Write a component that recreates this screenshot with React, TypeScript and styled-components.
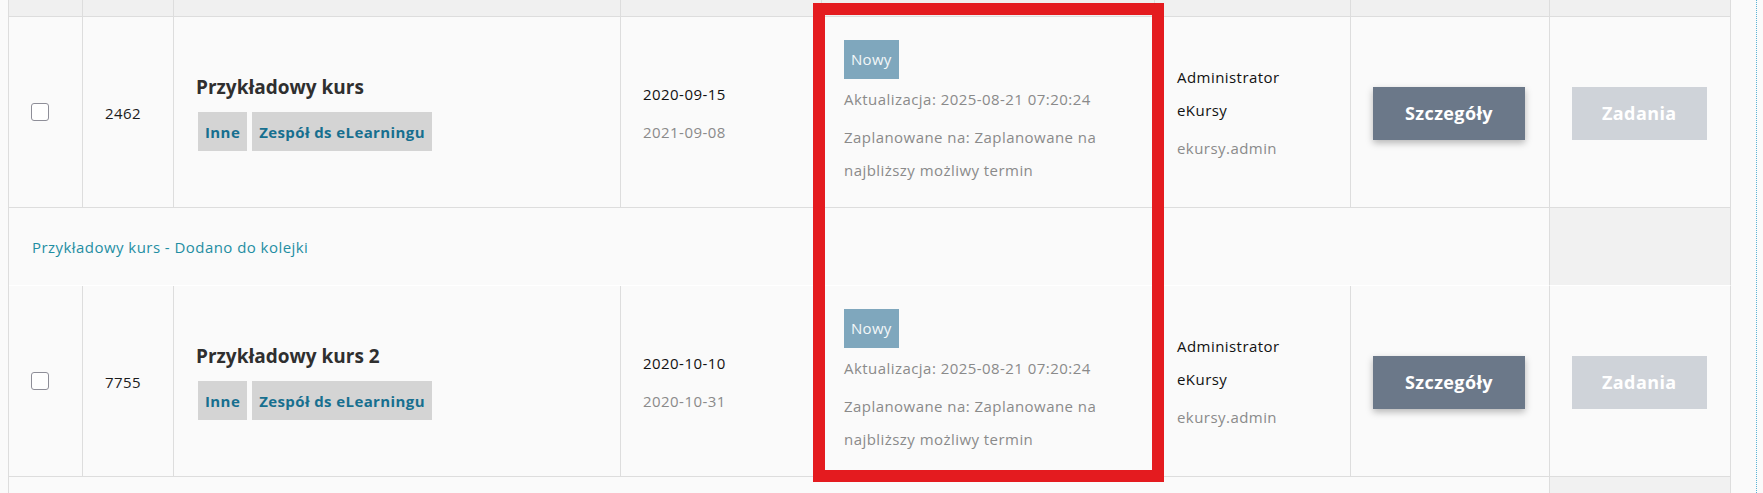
import React from "react";
import styled, { createGlobalStyle, css } from "styled-components";

const GlobalStyle = createGlobalStyle`
  * { box-sizing: border-box; }
  html, body {
    margin: 0;
    padding: 0;
    background: #fafafa;
  }
  body {
    font-family: "Open Sans", "Liberation Sans", sans-serif;
    font-size: 15px;
    letter-spacing: 0.45px;
    color: #111111;
    overflow: hidden;
  }
`;

const COLUMNS = "74px 91px 447px 201px 333px 196px 199px 181px";

const Page = styled.div`
  position: relative;
  width: 1757px;
  height: 493px;
  padding-left: 8px;
  border-right: 1px dotted #5ab3d6;
  overflow: hidden;
`;

const Table = styled.div`
  width: 1723px;
  border-left: 1px solid #dddddd;
  display: flex;
  flex-direction: column;
`;

const Row = styled.div`
  display: grid;
  grid-template-columns: ${COLUMNS};
`;

const HeadCell = styled.div`
  height: 17px;
  background: #f0f0f0;
  border-right: 1px solid #dddddd;
  border-bottom: 1px solid #dddddd;
`;

const Cell = styled.div`
  height: 191px;
  padding: 2px 22px 0;
  display: flex;
  flex-direction: column;
  justify-content: center;
  align-items: flex-start;
  background: #fafafa;
  border-right: 1px solid #dddddd;
  border-bottom: 1px solid #dddddd;
`;

const MessageCell = styled.div`
  grid-column: 1 / span 7;
  height: 78px;
  padding: 2px 23px 0;
  display: flex;
  align-items: center;
  line-height: 33px;
  color: #1f8ea3;
  background: #fafafa;
  border-right: 1px solid #dddddd;
  border-bottom: 1px solid #ffffff;
`;

const MessageSide = styled.div`
  height: 78px;
  background: #f1f1f1;
  border-right: 1px solid #dddddd;
  border-bottom: 1px solid #ffffff;
`;

const Check = styled.input.attrs({ type: "checkbox" })`
  appearance: none;
  -webkit-appearance: none;
  width: 18px;
  height: 18px;
  margin: -3px 0 0;
  background: #ffffff;
  border: 1px solid #8e8e98;
  border-radius: 3px;
`;

const Id = styled.div`
  line-height: 33px;
  color: #1c1c1c;
`;

const Title = styled.div`
  font-size: 19px;
  font-weight: 700;
  line-height: 24px;
  letter-spacing: 0;
  color: #2f2f2f;
  margin: 0 0 13px;
`;

const Tags = styled.div`
  display: flex;
  gap: 5px;
  margin-left: 2px;
`;

const Tag = styled.span`
  height: 39px;
  display: inline-flex;
  align-items: center;
  padding: 0 7px;
  background: #d4d4d4;
  color: #176f8f;
  font-weight: 700;
  letter-spacing: 0.4px;
`;

const Line = styled.div<{ $muted?: boolean; $narrow?: boolean }>`
  line-height: 33px;
  color: ${(p) => (p.$muted ? "#8a8a8a" : "#111111")};
  ${(p) =>
    p.$narrow &&
    css`
      max-width: 140px;
    `}
  & + & {
    margin-top: 5px;
  }
`;

const Badge = styled.span`
  height: 39px;
  display: inline-flex;
  align-items: center;
  padding: 0 7px;
  margin-bottom: 4px;
  background: #7fa7bd;
  color: #f3f7f9;
  letter-spacing: 0.3px;
`;

const Button = styled.button<{ $disabled?: boolean }>`
  height: 53px;
  padding: 0 ${(p) => (p.$disabled ? 30 : 32)}px;
  border: none;
  font-family: "Open Sans", "Liberation Sans", sans-serif;
  font-size: 18px;
  font-weight: 700;
  letter-spacing: 0.4px;
  color: #ffffff;
  background: ${(p) => (p.$disabled ? "#cfd3d9" : "#6b7889")};
  box-shadow: ${(p) => (p.$disabled ? "none" : "0 3px 7px rgba(0, 0, 0, 0.28)")};
  cursor: ${(p) => (p.$disabled ? "default" : "pointer")};
`;

const Annotation = styled.div`
  position: absolute;
  left: 813px;
  top: 3px;
  width: 351px;
  height: 479px;
  border: 12px solid #e41b1f;
  pointer-events: none;
`;

type Course = {
  id: string;
  title: string;
  start: string;
  end: string;
};

const courses: Course[] = [
  { id: "2462", title: "Przykładowy kurs", start: "2020-09-15", end: "2021-09-08" },
  { id: "7755", title: "Przykładowy kurs 2", start: "2020-10-10", end: "2020-10-31" },
];

const CourseRow: React.FC<{ course: Course }> = ({ course }) => (
  <Row>
    <Cell>
      <Check />
    </Cell>
    <Cell>
      <Id>{course.id}</Id>
    </Cell>
    <Cell>
      <Title>{course.title}</Title>
      <Tags>
        <Tag>Inne</Tag>
        <Tag>Zespół ds eLearningu</Tag>
      </Tags>
    </Cell>
    <Cell>
      <Line>{course.start}</Line>
      <Line $muted>{course.end}</Line>
    </Cell>
    <Cell>
      <Badge>Nowy</Badge>
      <Line $muted>Aktualizacja: 2025-08-21 07:20:24</Line>
      <Line $muted>Zaplanowane na: Zaplanowane na najbliższy możliwy termin</Line>
    </Cell>
    <Cell>
      <Line $narrow>Administrator eKursy</Line>
      <Line $muted>ekursy.admin</Line>
    </Cell>
    <Cell>
      <Button>Szczegóły</Button>
    </Cell>
    <Cell>
      <Button $disabled disabled>
        Zadania
      </Button>
    </Cell>
  </Row>
);

const MessageRow: React.FC<{ text?: string }> = ({ text }) => (
  <Row>
    <MessageCell>{text}</MessageCell>
    <MessageSide />
  </Row>
);

export default function App() {
  return (
    <>
      <GlobalStyle />
      <Page>
        <Table>
          <Row>
            {Array.from({ length: 8 }).map((_, i) => (
              <HeadCell key={i} />
            ))}
          </Row>
          <CourseRow course={courses[0]} />
          <MessageRow text="Przykładowy kurs - Dodano do kolejki" />
          <CourseRow course={courses[1]} />
          <MessageRow />
        </Table>
        <Annotation />
      </Page>
    </>
  );
}
